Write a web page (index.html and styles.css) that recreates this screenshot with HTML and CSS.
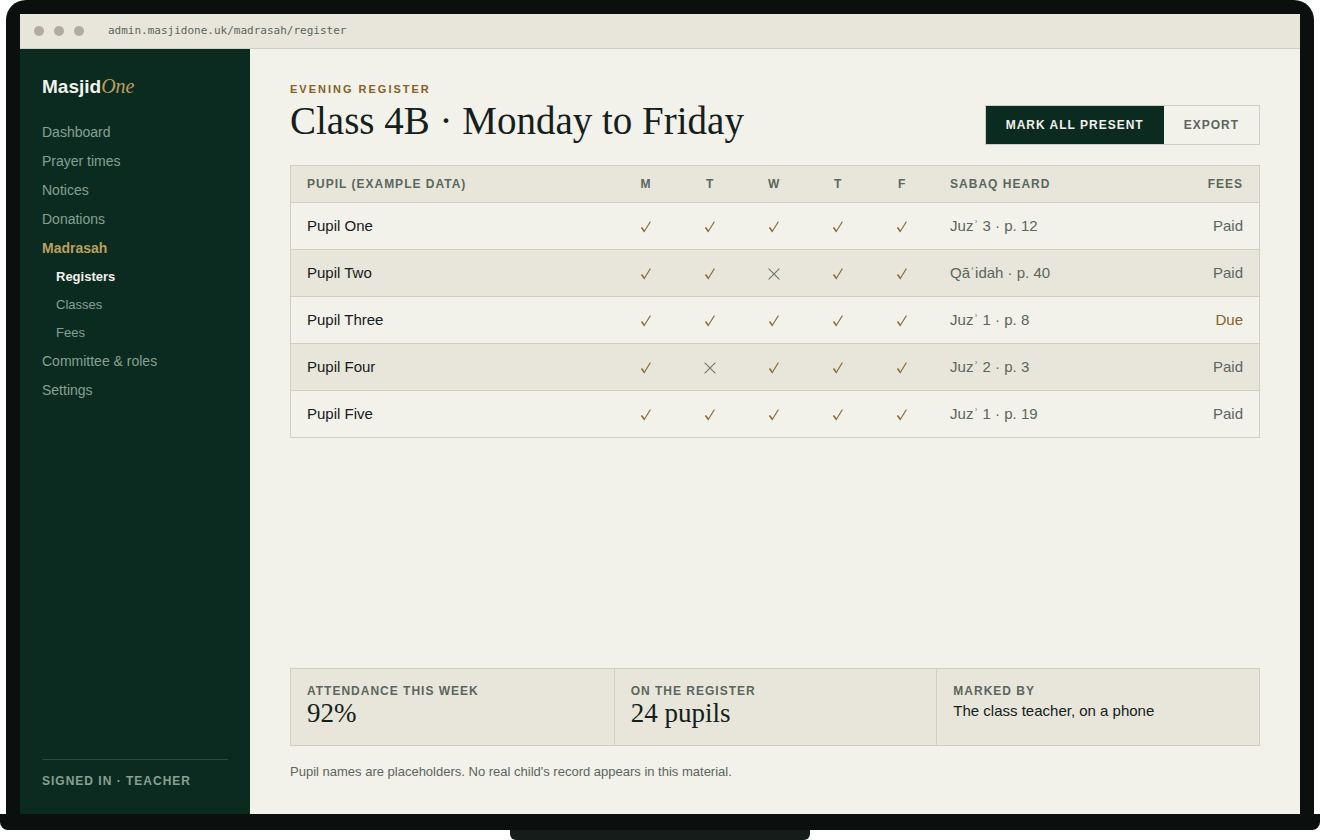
FILE: index.html
```html
<!DOCTYPE html>
<html lang="en">
<head>
  <meta charset="UTF-8">
  <meta name="viewport" content="width=device-width, initial-scale=1.0">
  <title>MasjidOne - Evening register</title>
  <link rel="stylesheet" href="styles.css">
</head>
<body>
  <!-- Shared attendance marks -->
  <svg class="sprite" aria-hidden="true">
    <symbol id="tick" viewBox="0 0 12 12">
      <path d="M1.5 6.8 L4.2 10.5 L10.4 .6" fill="none" stroke="currentColor" stroke-width="1.1"/>
      <path d="M1 6.8 L2.3 6.2 L4.7 9.4 L4.2 11.2 Z" fill="currentColor"/>
    </symbol>
    <symbol id="cross" viewBox="0 0 12 12">
      <path d="M.6 .6 L11.4 11.4 M11.4 .6 L.6 11.4" fill="none" stroke="currentColor" stroke-width="1.1"/>
    </symbol>
  </svg>

  <div class="lid">
    <div class="screen">
      <div class="browser-bar">
        <span class="dot"></span>
        <span class="dot"></span>
        <span class="dot"></span>
        <span class="url">admin.masjidone.uk/madrasah/register</span>
      </div>

      <div class="app">
        <aside class="sidebar">
          <div class="logo">Masjid<em>One</em></div>
          <nav class="nav">
            <a href="#">Dashboard</a>
            <a href="#">Prayer times</a>
            <a href="#">Notices</a>
            <a href="#">Donations</a>
            <a href="#" class="current">Madrasah</a>
            <a href="#" class="sub active">Registers</a>
            <a href="#" class="sub">Classes</a>
            <a href="#" class="sub">Fees</a>
            <a href="#">Committee &amp; roles</a>
            <a href="#">Settings</a>
          </nav>
          <div class="signed-in">Signed in · Teacher</div>
        </aside>

        <main class="main">
          <header class="page-head">
            <div>
              <div class="eyebrow">Evening register</div>
              <h1>Class 4B · Monday to Friday</h1>
            </div>
            <div class="actions">
              <button type="button" class="primary">Mark all present</button>
              <button type="button">Export</button>
            </div>
          </header>

          <table class="register">
            <thead>
              <tr>
                <th class="pupil">Pupil (example data)</th>
                <th class="day">M</th>
                <th class="day">T</th>
                <th class="day">W</th>
                <th class="day">T</th>
                <th class="day">F</th>
                <th class="sabaq">Sabaq heard</th>
                <th class="fees">Fees</th>
              </tr>
            </thead>
            <tbody>
              <tr>
                <td class="pupil">Pupil One</td>
                <td class="day"><svg class="mark"><use href="#tick"/></svg></td>
                <td class="day"><svg class="mark"><use href="#tick"/></svg></td>
                <td class="day"><svg class="mark"><use href="#tick"/></svg></td>
                <td class="day"><svg class="mark"><use href="#tick"/></svg></td>
                <td class="day"><svg class="mark"><use href="#tick"/></svg></td>
                <td>Juzʾ 3 · p. 12</td>
                <td class="fees">Paid</td>
              </tr>
              <tr>
                <td class="pupil">Pupil Two</td>
                <td class="day"><svg class="mark"><use href="#tick"/></svg></td>
                <td class="day"><svg class="mark"><use href="#tick"/></svg></td>
                <td class="day"><svg class="mark absent"><use href="#cross"/></svg></td>
                <td class="day"><svg class="mark"><use href="#tick"/></svg></td>
                <td class="day"><svg class="mark"><use href="#tick"/></svg></td>
                <td>Qāʿidah · p. 40</td>
                <td class="fees">Paid</td>
              </tr>
              <tr>
                <td class="pupil">Pupil Three</td>
                <td class="day"><svg class="mark"><use href="#tick"/></svg></td>
                <td class="day"><svg class="mark"><use href="#tick"/></svg></td>
                <td class="day"><svg class="mark"><use href="#tick"/></svg></td>
                <td class="day"><svg class="mark"><use href="#tick"/></svg></td>
                <td class="day"><svg class="mark"><use href="#tick"/></svg></td>
                <td>Juzʾ 1 · p. 8</td>
                <td class="fees due">Due</td>
              </tr>
              <tr>
                <td class="pupil">Pupil Four</td>
                <td class="day"><svg class="mark"><use href="#tick"/></svg></td>
                <td class="day"><svg class="mark absent"><use href="#cross"/></svg></td>
                <td class="day"><svg class="mark"><use href="#tick"/></svg></td>
                <td class="day"><svg class="mark"><use href="#tick"/></svg></td>
                <td class="day"><svg class="mark"><use href="#tick"/></svg></td>
                <td>Juzʾ 2 · p. 3</td>
                <td class="fees">Paid</td>
              </tr>
              <tr>
                <td class="pupil">Pupil Five</td>
                <td class="day"><svg class="mark"><use href="#tick"/></svg></td>
                <td class="day"><svg class="mark"><use href="#tick"/></svg></td>
                <td class="day"><svg class="mark"><use href="#tick"/></svg></td>
                <td class="day"><svg class="mark"><use href="#tick"/></svg></td>
                <td class="day"><svg class="mark"><use href="#tick"/></svg></td>
                <td>Juzʾ 1 · p. 19</td>
                <td class="fees">Paid</td>
              </tr>
            </tbody>
          </table>

          <section class="stats">
            <div class="stat">
              <div class="label">Attendance this week</div>
              <div class="figure">92%</div>
            </div>
            <div class="stat">
              <div class="label">On the register</div>
              <div class="figure">24 pupils</div>
            </div>
            <div class="stat">
              <div class="label">Marked by</div>
              <div class="detail">The class teacher, on a phone</div>
            </div>
          </section>
          <p class="note">Pupil names are placeholders. No real child's record appears in this material.</p>
        </main>
      </div>
    </div>
  </div>
  <div class="base"></div>
  <div class="foot"></div>
</body>
</html>
```
FILE: styles.css
```css
:root {
  --ink: #14201b;
  --muted: #5a665e;
  --green: #0c2b20;
  --paper: #f2f1ea;
  --sand: #e8e6da;
  --line: #cfcfc2;
  --gold: #84622a;
  --sans: "Liberation Sans", Arial, sans-serif;
  --serif: "Liberation Serif", "Times New Roman", serif;
}
* {
  box-sizing: border-box;
}
body {
  margin: 0;
  min-height: 100vh;
  display: flex;
  flex-direction: column;
  background: #fff;
  color: var(--ink);
  font-family: var(--sans);
  font-size: 15px;
  line-height: 20px;
}
.sprite {
  display: none;
}

/* Laptop */
.lid {
  flex: 1;
  display: flex;
  margin: 0 6px;
  padding: 14px 14px 0;
  background: #0b0f0d;
  border-radius: 20px 20px 0 0;
}
.screen {
  flex: 1;
  display: flex;
  flex-direction: column;
  background: var(--paper);
}
.base {
  height: 16px;
  background: #0b0f0d;
  border-radius: 0 0 8px 8px;
}
.foot {
  width: 300px;
  height: 10px;
  margin: 0 auto;
  background: #161c19;
  border-radius: 0 0 6px 6px;
}

/* Browser bar */
.browser-bar {
  display: flex;
  align-items: center;
  gap: 10px;
  height: 35px;
  padding: 0 14px;
  background: var(--sand);
  border-bottom: 1px solid var(--line);
}
.dot {
  width: 10px;
  height: 10px;
  border-radius: 50%;
  background: #b0ad9f;
}
.url {
  margin-left: 14px;
  color: var(--muted);
  font-family: "DejaVu Sans Mono", monospace;
  font-size: 11px;
}

/* Sidebar */
.app {
  flex: 1;
  display: flex;
}
.sidebar {
  display: flex;
  flex-direction: column;
  width: 230px;
  padding: 26px 22px 23px;
  background: var(--green);
}
.logo {
  margin-bottom: 20px;
  color: var(--paper);
  font-size: 19px;
  font-weight: bold;
  line-height: 22px;
}
.logo em {
  color: #bd9f5f;
  font-family: var(--serif);
  font-size: 20px;
  font-weight: normal;
}
.nav {
  display: flex;
  flex-direction: column;
}
.nav a {
  color: #86a093;
  font-size: 14px;
  line-height: 29px;
  text-decoration: none;
}
.nav .current {
  color: #bd9f5f;
  font-weight: bold;
}
.nav .sub {
  padding-left: 14px;
  font-size: 13px;
  line-height: 28px;
}
.nav .active {
  color: var(--paper);
  font-weight: bold;
}
.signed-in {
  margin-top: auto;
  padding-top: 11px;
  border-top: 1px solid #2b483c;
  color: #86a093;
  font-size: 12px;
  font-weight: bold;
  letter-spacing: 1px;
  text-transform: uppercase;
}

/* Page */
.main {
  flex: 1;
  display: flex;
  flex-direction: column;
  padding: 32px 40px;
}
.page-head {
  display: flex;
  justify-content: space-between;
  align-items: flex-end;
  margin-bottom: 20px;
}
.eyebrow {
  color: var(--gold);
  font-size: 11px;
  font-weight: bold;
  line-height: 16px;
  letter-spacing: 2px;
  text-transform: uppercase;
}
h1 {
  margin: 0;
  font-family: var(--serif);
  font-size: 39px;
  font-weight: normal;
  line-height: 48px;
}
.actions {
  display: flex;
  border: 1px solid var(--line);
}
button {
  height: 38px;
  padding: 0 20px;
  border: 0;
  background: transparent;
  color: var(--muted);
  font-family: var(--sans);
  font-size: 12px;
  font-weight: bold;
  letter-spacing: 1px;
  text-transform: uppercase;
  cursor: pointer;
}
button.primary {
  background: var(--green);
  color: var(--paper);
}

/* Register table */
.register {
  width: 100%;
  table-layout: fixed;
  border-collapse: separate;
  border-spacing: 0;
  border: 1px solid var(--line);
  color: var(--muted);
}
.register th,
.register td {
  height: 47px;
  padding: 0 16px;
  border-bottom: 1px solid var(--line);
  text-align: left;
}
.register th {
  height: 37px;
  background: var(--sand);
  font-size: 12px;
  letter-spacing: 1px;
  line-height: 16px;
  text-transform: uppercase;
}
.register tr:last-child td {
  height: 46px;
  border-bottom: 0;
}
.register tbody tr:nth-child(even) {
  background: var(--sand);
}
.register td.pupil {
  color: var(--ink);
}
.register th.day {
  width: 64px;
}
.register .day {
  padding: 0;
  text-align: center;
}
.register th.sabaq {
  width: 22%;
}
.register th.fees {
  width: 112px;
}
.register .fees {
  text-align: right;
}
.register .due {
  color: var(--gold);
}
.mark {
  display: block;
  width: 12px;
  height: 12px;
  margin: 2px auto 0;
  color: #8b6d38;
}
.mark.absent {
  color: #6c766e;
}

/* Summary */
.stats {
  display: grid;
  grid-template-columns: repeat(3, 1fr);
  margin-top: auto;
  border: 1px solid var(--line);
  background: var(--sand);
}
.stat {
  padding: 14px 16px 18px;
}
.stat + .stat {
  border-left: 1px solid var(--line);
}
.label {
  color: var(--muted);
  font-size: 12px;
  font-weight: bold;
  line-height: 16px;
  letter-spacing: 1px;
  text-transform: uppercase;
}
.figure {
  font-family: var(--serif);
  font-size: 27px;
  line-height: 28px;
}
.detail {
  line-height: 24px;
}
.note {
  margin: 16px 0 0;
  color: var(--muted);
  font-size: 13px;
}
```
